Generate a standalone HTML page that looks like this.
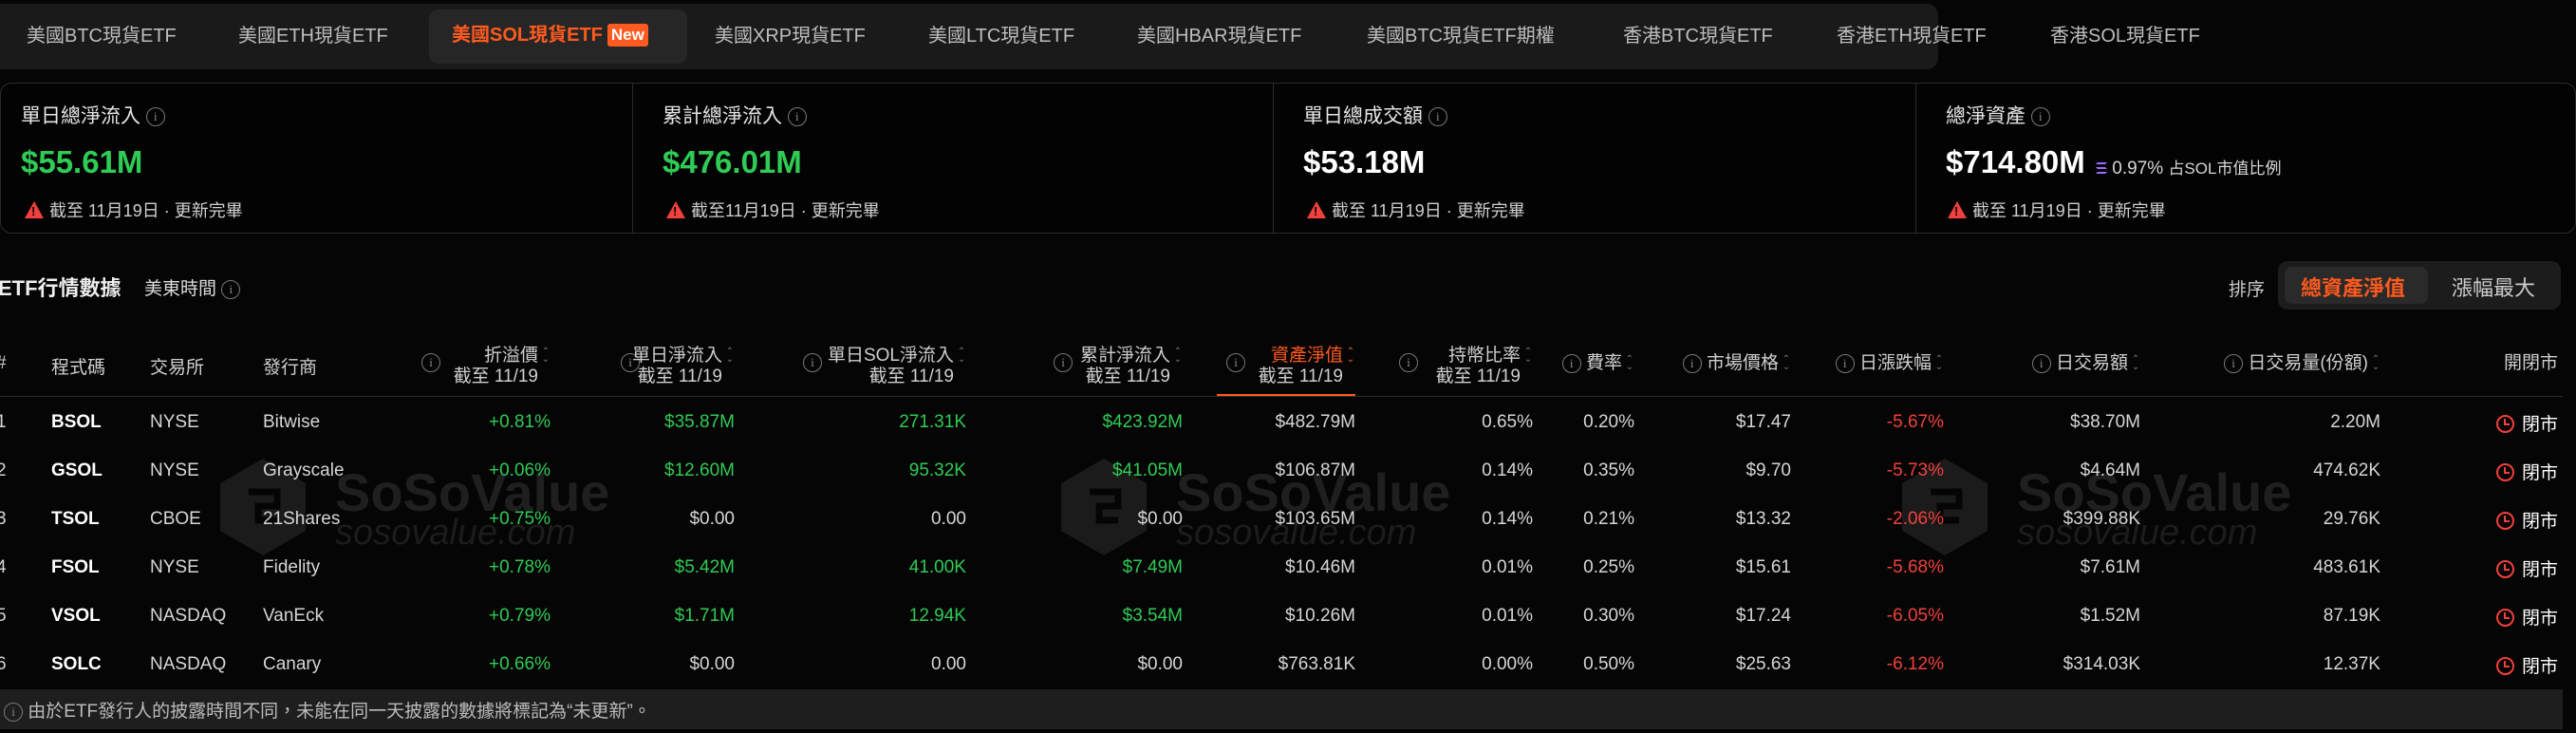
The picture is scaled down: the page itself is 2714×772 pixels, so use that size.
<!DOCTYPE html>
<html><head><meta charset="utf-8">
<style>
*{box-sizing:border-box;margin:0;padding:0}
body{width:2714px;height:772px;background:#050505;color:#d8d8d8;font-family:"Liberation Sans","Noto Sans CJK TC",sans-serif;position:relative;overflow:hidden}
.abs{position:absolute;white-space:nowrap}
.tabbar{position:absolute;left:0;top:4px;width:2042px;height:69px;background:#1a1a1a;border-radius:0 12px 12px 0}
.tab{position:absolute;top:27px;font-size:20px;color:#bdbdbd;line-height:22px}
.act{position:absolute;left:452px;top:10px;width:272px;height:57px;background:#262626;border-radius:10px}
.new{display:inline-block;background:#ff5a1f;color:#fff;font-size:17px;padding:2px 4px;border-radius:3px;margin-left:5px;line-height:20px;vertical-align:1px}
.cards{position:absolute;left:0;top:87px;width:2714px;height:159px;border:1px solid #2a2a2a;border-radius:12px;background:#030303}
.div{position:absolute;top:88px;width:1px;height:157px;background:#2a2a2a}
.ct{position:absolute;top:106px;font-size:21px;color:#e6e6e6}
.cv{position:absolute;top:152px;font-size:33px;font-weight:bold;color:#fff}
.g{color:#2fcb55}.r{color:#f2403c}
.cn{position:absolute;top:208px;font-size:18px;color:#cfcfcf}
.info{display:inline-block;width:20px;height:20px;border:1.5px solid #777;border-radius:50%;font-size:13px;line-height:17px;text-align:center;color:#888;font-family:"Liberation Serif",serif;vertical-align:middle}
.warn{display:inline-block;width:0;height:0;border-left:10px solid transparent;border-right:10px solid transparent;border-bottom:18px solid #f2403c;position:relative;vertical-align:-2px;margin-right:6px}
.warn:after{content:"!";position:absolute;left:-3px;top:3px;color:#050505;font-size:13px;font-weight:bold}
.h{position:absolute;font-size:19px;color:#cfcfcf;line-height:22px;text-align:right}
.hl{position:absolute;font-size:19px;color:#cfcfcf;top:372px}
.srt{display:inline-block;width:10px;font-size:10px;color:#777;line-height:8px;vertical-align:middle;text-align:center;margin-left:3px}
.row{position:absolute;left:0;width:2714px;height:51px}
.row span{position:absolute;top:14px;font-size:19px;white-space:nowrap;color:#d6d6d6}
.row span.g{color:#2fcb55}
.row span.r{color:#f2403c}
.row span.w{color:#fff;font-weight:bold}
.wm{position:absolute;color:#262626}
.clk{display:inline-block;width:19px;height:19px;border:2px solid #f2403c;border-radius:50%;position:relative;vertical-align:-3px;margin-right:8px}
.clk:after{content:"";position:absolute;left:6px;top:2px;width:4px;height:5px;border-left:2px solid #f2403c;border-bottom:2px solid #f2403c}
</style></head><body>

<div class="wm" style="left:232px;top:483px">
<svg width="90" height="102" viewBox="0 0 90 102"><path d="M45 0L90 26V76L45 102L0 76V26Z" fill="#1b1b1b"/><path d="M30 35H60V50H40V65H60" stroke="#050505" stroke-width="7" fill="none"/></svg></div>
<div class="wm abs" style="left:353px;top:486px;font-size:56px;font-weight:bold;color:#1f1f1f">SoSoValue</div>
<div class="wm abs" style="left:353px;top:540px;font-size:38px;font-style:italic;color:#1c1c1c">sosovalue.com</div>
<div class="wm" style="left:1118px;top:483px">
<svg width="90" height="102" viewBox="0 0 90 102"><path d="M45 0L90 26V76L45 102L0 76V26Z" fill="#1b1b1b"/><path d="M30 35H60V50H40V65H60" stroke="#050505" stroke-width="7" fill="none"/></svg></div>
<div class="wm abs" style="left:1239px;top:486px;font-size:56px;font-weight:bold;color:#1f1f1f">SoSoValue</div>
<div class="wm abs" style="left:1239px;top:540px;font-size:38px;font-style:italic;color:#1c1c1c">sosovalue.com</div>
<div class="wm" style="left:2004px;top:483px">
<svg width="90" height="102" viewBox="0 0 90 102"><path d="M45 0L90 26V76L45 102L0 76V26Z" fill="#1b1b1b"/><path d="M30 35H60V50H40V65H60" stroke="#050505" stroke-width="7" fill="none"/></svg></div>
<div class="wm abs" style="left:2125px;top:486px;font-size:56px;font-weight:bold;color:#1f1f1f">SoSoValue</div>
<div class="wm abs" style="left:2125px;top:540px;font-size:38px;font-style:italic;color:#1c1c1c">sosovalue.com</div>

<div class="tabbar"></div>
<div class="act"></div>
<div class="tab abs" style="left:28px">美國BTC現貨ETF</div>
<div class="tab abs" style="left:251px">美國ETH現貨ETF</div>
<div class="tab abs" style="left:476px;top:25px;color:#ff5a1f;font-weight:bold">美國SOL現貨ETF<span class="new">New</span></div>
<div class="tab abs" style="left:753px">美國XRP現貨ETF</div>
<div class="tab abs" style="left:978px">美國LTC現貨ETF</div>
<div class="tab abs" style="left:1198px">美國HBAR現貨ETF</div>
<div class="tab abs" style="left:1440px">美國BTC現貨ETF期權</div>
<div class="tab abs" style="left:1710px">香港BTC現貨ETF</div>
<div class="tab abs" style="left:1935px">香港ETH現貨ETF</div>
<div class="tab abs" style="left:2160px">香港SOL現貨ETF</div>

<div class="cards"></div>
<div class="div" style="left:666px"></div>
<div class="div" style="left:1341px"></div>
<div class="div" style="left:2018px"></div>
<div class="ct abs" style="left:22px">單日總淨流入 <span class="info">i</span></div>
<div class="cv abs g" style="left:22px">$55.61M</div>
<div class="cn abs" style="left:26px"><span class="warn"></span>截至 11月19日 · 更新完畢</div>
<div class="ct abs" style="left:698px">累計總淨流入 <span class="info">i</span></div>
<div class="cv abs g" style="left:698px">$476.01M</div>
<div class="cn abs" style="left:702px"><span class="warn"></span>截至11月19日 · 更新完畢</div>
<div class="ct abs" style="left:1373px">單日總成交額 <span class="info">i</span></div>
<div class="cv abs" style="left:1373px">$53.18M</div>
<div class="cn abs" style="left:1377px"><span class="warn"></span>截至 11月19日 · 更新完畢</div>
<div class="ct abs" style="left:2050px">總淨資產 <span class="info">i</span></div>
<div class="cv abs" style="left:2050px">$714.80M</div>
<div class="abs" style="left:2208px;top:163px;font-size:19px;color:#d6d6d6"><svg width="12" height="14" viewBox="0 0 12 14" style="vertical-align:-1px"><path d="M2 1H12L10 3H0ZM0 6H10L12 8H2ZM2 11H12L10 13H0Z" fill="#9b6cff"/></svg> 0.97% <span style="font-size:17px">占SOL市值比例</span></div>
<div class="cn abs" style="left:2052px"><span class="warn"></span>截至 11月19日 · 更新完畢</div>

<div class="abs" style="left:-2px;top:286px;font-size:22px;font-weight:bold;color:#eee">ETF行情數據</div>
<div class="abs" style="left:152px;top:289px;font-size:19px;color:#ddd">美東時間 <span class="info">i</span></div>
<div class="abs" style="left:2348px;top:290px;font-size:19px;color:#ccc">排序</div>
<div class="abs" style="left:2400px;top:275px;width:298px;height:51px;background:#1c1c1c;border-radius:10px"></div>
<div class="abs" style="left:2407px;top:281px;width:151px;height:39px;background:#2a2a2a;border-radius:8px"></div>
<div class="abs" style="left:2424px;top:286px;font-size:22px;color:#ff5a1f;font-weight:bold">總資產淨值</div>
<div class="abs" style="left:2583px;top:286px;font-size:22px;color:#ccc">漲幅最大</div>

<div class="hl" style="left:-4px">#</div>
<div class="hl" style="left:54px">程式碼</div>
<div class="hl" style="left:158px">交易所</div>
<div class="hl" style="left:277px">發行商</div>
<div class="abs" style="left:444px;top:372px"><span class="info">i</span></div>
<div class="h" style="right:2134px;top:364px">折溢價<span class="srt">⌃<br>⌄</span><br>截至 11/19<span class="srt"></span></div>
<div class="abs" style="left:654px;top:372px"><span class="info">i</span></div>
<div class="h" style="right:1940px;top:364px">單日淨流入<span class="srt">⌃<br>⌄</span><br>截至 11/19<span class="srt"></span></div>
<div class="abs" style="left:846px;top:372px"><span class="info">i</span></div>
<div class="h" style="right:1696px;top:364px">單日SOL淨流入<span class="srt">⌃<br>⌄</span><br>截至 11/19<span class="srt"></span></div>
<div class="abs" style="left:1110px;top:372px"><span class="info">i</span></div>
<div class="h" style="right:1468px;top:364px">累計淨流入<span class="srt">⌃<br>⌄</span><br>截至 11/19<span class="srt"></span></div>
<div class="abs" style="left:1292px;top:372px"><span class="info">i</span></div>
<div class="h" style="right:1286px;top:364px"><span style="color:#ff5a1f">資產淨值</span><span class="srt" style="color:#ff5a1f">⌃<br>⌄</span><br>截至 11/19<span class="srt"></span></div>
<div class="abs" style="left:1282px;top:415px;width:146px;height:2px;background:#ff5a1f"></div>
<div class="abs" style="left:1474px;top:372px"><span class="info">i</span></div>
<div class="h" style="right:1099px;top:364px">持幣比率<span class="srt">⌃<br>⌄</span><br>截至 11/19<span class="srt"></span></div>
<div class="h" style="right:992px;top:372px"><span class="info">i</span> 費率<span class="srt">⌃<br>⌄</span></div>
<div class="h" style="right:827px;top:372px"><span class="info">i</span> 市場價格<span class="srt">⌃<br>⌄</span></div>
<div class="h" style="right:666px;top:372px"><span class="info">i</span> 日漲跌幅<span class="srt">⌃<br>⌄</span></div>
<div class="h" style="right:459px;top:372px"><span class="info">i</span> 日交易額<span class="srt">⌃<br>⌄</span></div>
<div class="h" style="right:206px;top:372px"><span class="info">i</span> 日交易量(份額)<span class="srt">⌃<br>⌄</span></div>
<div class="h" style="right:19px;top:372px">開閉市</div>
<div class="abs" style="left:0;top:417px;width:2700px;height:1px;background:#2e2e2e"></div>

<div class="row" style="top:420px"><span style="left:-4px">1</span><span class="w" style="left:54px">BSOL</span><span style="left:158px">NYSE</span><span style="left:277px">Bitwise</span><span class="g" style="right:2134px">+0.81%</span><span class="g" style="right:1940px">$35.87M</span><span class="g" style="right:1696px">271.31K</span><span class="g" style="right:1468px">$423.92M</span><span style="right:1286px">$482.79M</span><span style="right:1099px">0.65%</span><span style="right:992px">0.20%</span><span style="right:827px">$17.47</span><span class="r" style="right:666px">-5.67%</span><span style="right:459px">$38.70M</span><span style="right:206px">2.20M</span><span class="w" style="right:19px;top:12px;font-weight:normal"><i class="clk"></i>閉市</span></div>
<div class="row" style="top:471px"><span style="left:-4px">2</span><span class="w" style="left:54px">GSOL</span><span style="left:158px">NYSE</span><span style="left:277px">Grayscale</span><span class="g" style="right:2134px">+0.06%</span><span class="g" style="right:1940px">$12.60M</span><span class="g" style="right:1696px">95.32K</span><span class="g" style="right:1468px">$41.05M</span><span style="right:1286px">$106.87M</span><span style="right:1099px">0.14%</span><span style="right:992px">0.35%</span><span style="right:827px">$9.70</span><span class="r" style="right:666px">-5.73%</span><span style="right:459px">$4.64M</span><span style="right:206px">474.62K</span><span class="w" style="right:19px;top:12px;font-weight:normal"><i class="clk"></i>閉市</span></div>
<div class="row" style="top:522px"><span style="left:-4px">3</span><span class="w" style="left:54px">TSOL</span><span style="left:158px">CBOE</span><span style="left:277px">21Shares</span><span class="g" style="right:2134px">+0.75%</span><span style="right:1940px">$0.00</span><span style="right:1696px">0.00</span><span style="right:1468px">$0.00</span><span style="right:1286px">$103.65M</span><span style="right:1099px">0.14%</span><span style="right:992px">0.21%</span><span style="right:827px">$13.32</span><span class="r" style="right:666px">-2.06%</span><span style="right:459px">$399.88K</span><span style="right:206px">29.76K</span><span class="w" style="right:19px;top:12px;font-weight:normal"><i class="clk"></i>閉市</span></div>
<div class="row" style="top:573px"><span style="left:-4px">4</span><span class="w" style="left:54px">FSOL</span><span style="left:158px">NYSE</span><span style="left:277px">Fidelity</span><span class="g" style="right:2134px">+0.78%</span><span class="g" style="right:1940px">$5.42M</span><span class="g" style="right:1696px">41.00K</span><span class="g" style="right:1468px">$7.49M</span><span style="right:1286px">$10.46M</span><span style="right:1099px">0.01%</span><span style="right:992px">0.25%</span><span style="right:827px">$15.61</span><span class="r" style="right:666px">-5.68%</span><span style="right:459px">$7.61M</span><span style="right:206px">483.61K</span><span class="w" style="right:19px;top:12px;font-weight:normal"><i class="clk"></i>閉市</span></div>
<div class="row" style="top:624px"><span style="left:-4px">5</span><span class="w" style="left:54px">VSOL</span><span style="left:158px">NASDAQ</span><span style="left:277px">VanEck</span><span class="g" style="right:2134px">+0.79%</span><span class="g" style="right:1940px">$1.71M</span><span class="g" style="right:1696px">12.94K</span><span class="g" style="right:1468px">$3.54M</span><span style="right:1286px">$10.26M</span><span style="right:1099px">0.01%</span><span style="right:992px">0.30%</span><span style="right:827px">$17.24</span><span class="r" style="right:666px">-6.05%</span><span style="right:459px">$1.52M</span><span style="right:206px">87.19K</span><span class="w" style="right:19px;top:12px;font-weight:normal"><i class="clk"></i>閉市</span></div>
<div class="row" style="top:675px"><span style="left:-4px">6</span><span class="w" style="left:54px">SOLC</span><span style="left:158px">NASDAQ</span><span style="left:277px">Canary</span><span class="g" style="right:2134px">+0.66%</span><span style="right:1940px">$0.00</span><span style="right:1696px">0.00</span><span style="right:1468px">$0.00</span><span style="right:1286px">$763.81K</span><span style="right:1099px">0.00%</span><span style="right:992px">0.50%</span><span style="right:827px">$25.63</span><span class="r" style="right:666px">-6.12%</span><span style="right:459px">$314.03K</span><span style="right:206px">12.37K</span><span class="w" style="right:19px;top:12px;font-weight:normal"><i class="clk"></i>閉市</span></div>

<div class="abs" style="left:0;top:726px;width:2700px;height:42px;background:#1e1e1e"></div>
<div class="abs" style="left:4px;top:734px;font-size:19px;color:#bbb"><span class="info">i</span> 由於ETF發行人的披露時間不同，未能在同一天披露的數據將標記為“未更新”。</div>
</body></html>
